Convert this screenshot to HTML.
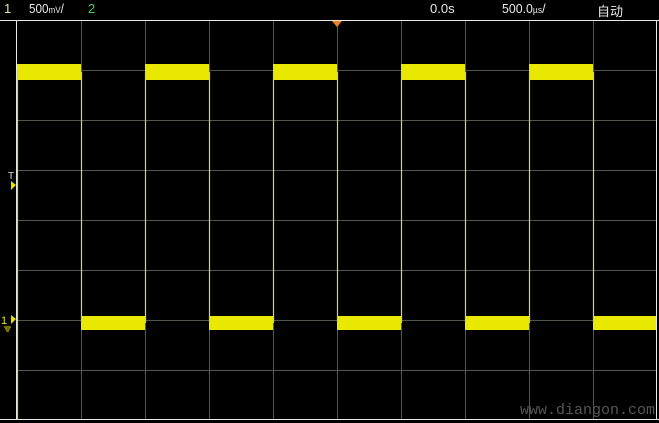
<!DOCTYPE html>
<html><head><style>
html,body{margin:0;padding:0;background:#000;width:659px;height:423px;overflow:hidden}
.t{position:absolute;top:1px;font:13px "Liberation Sans","Noto Sans CJK SC",sans-serif;color:#e8e8e8;transform-origin:left top}
</style></head><body>
<div style="position:relative;width:659px;height:423px">
<div class="t" style="left:4px;color:#e8e0a0">1</div>
<div class="t" style="left:29px;transform:scaleX(0.9)">500<span style="font-size:9px">mV</span>/</div>
<div class="t" style="left:88px;color:#4ad04a">2</div>
<div class="t" style="left:430px">0.0s</div>
<div class="t" style="left:502px;transform:scaleX(0.95)">500.0<span style="font-size:9px">µs</span>/</div>
<div class="t" style="left:597px">自动</div>
<svg width="659" height="423" style="position:absolute;left:0;top:0">
<g stroke="#55554a" stroke-width="1">
<line x1="81.5" y1="21" x2="81.5" y2="420"/><line x1="145.5" y1="21" x2="145.5" y2="420"/>
<line x1="209.5" y1="21" x2="209.5" y2="420"/><line x1="273.5" y1="21" x2="273.5" y2="420"/>
<line x1="337.5" y1="21" x2="337.5" y2="420"/><line x1="401.5" y1="21" x2="401.5" y2="420"/>
<line x1="465.5" y1="21" x2="465.5" y2="420"/><line x1="529.5" y1="21" x2="529.5" y2="420"/>
<line x1="593.5" y1="21" x2="593.5" y2="420"/>
<line x1="16" y1="70.5" x2="657" y2="70.5"/><line x1="16" y1="120.5" x2="657" y2="120.5"/>
<line x1="16" y1="170.5" x2="657" y2="170.5"/><line x1="16" y1="220.5" x2="657" y2="220.5"/>
<line x1="16" y1="270.5" x2="657" y2="270.5"/><line x1="16" y1="320.5" x2="657" y2="320.5"/>
<line x1="16" y1="370.5" x2="657" y2="370.5"/>
</g>
<g stroke="#e8e8e8" stroke-width="1">
<line x1="0" y1="20.5" x2="659" y2="20.5"/><line x1="0" y1="419.5" x2="659" y2="419.5"/>
<line x1="16.5" y1="20" x2="16.5" y2="420"/><line x1="656.5" y1="20" x2="656.5" y2="420"/>
</g>
<text x="520" y="414" font-family="Liberation Mono,monospace" font-size="15" fill="#555">www.diangon.com</text>
<g fill="#e8e800">
<rect x="17" y="64" width="64" height="16"/><rect x="145" y="64" width="64" height="16"/>
<rect x="273" y="64" width="64" height="16"/><rect x="401" y="64" width="64" height="16"/>
<rect x="529" y="64" width="64" height="16"/>
<rect x="81" y="316" width="64" height="14"/><rect x="209" y="316" width="64" height="14"/>
<rect x="337" y="316" width="64" height="14"/><rect x="465" y="316" width="64" height="14"/>
<rect x="593" y="316" width="63" height="14"/>
</g>
<g stroke="#d8d070" stroke-width="1.2">
<line x1="17.5" y1="70" x2="17.5" y2="420"/>
<line x1="81.5" y1="72" x2="81.5" y2="323"/><line x1="145.5" y1="72" x2="145.5" y2="323"/>
<line x1="209.5" y1="72" x2="209.5" y2="323"/><line x1="273.5" y1="72" x2="273.5" y2="323"/>
<line x1="337.5" y1="72" x2="337.5" y2="323"/><line x1="401.5" y1="72" x2="401.5" y2="323"/>
<line x1="465.5" y1="72" x2="465.5" y2="323"/><line x1="529.5" y1="72" x2="529.5" y2="323"/>
<line x1="593.5" y1="72" x2="593.5" y2="323"/>
</g>
<polygon points="332,21 342,21 337,27" fill="#f08020"/>
<polygon points="11,181 16,185 11,190" fill="#e8e000"/>
<text x="8" y="179" font-family="Liberation Sans" font-size="10" fill="#ddd">T</text>
<polygon points="11,315 16,319 11,324" fill="#e8e000"/>
<text x="1" y="324" font-family="Liberation Sans" font-size="11" fill="#e8e000">1</text>
<g stroke="#e8e000"><line x1="4" y1="327" x2="11" y2="327"/><line x1="5" y1="329" x2="10" y2="329"/><line x1="6" y1="331" x2="9" y2="331"/></g>
</svg>
</div>
</body></html>
